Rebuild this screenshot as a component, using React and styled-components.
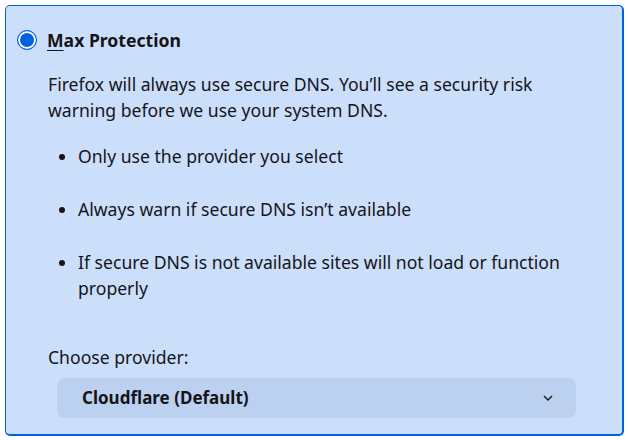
import styled, { createGlobalStyle } from "styled-components";

const GlobalStyle = createGlobalStyle`
  html, body {
    margin: 0;
    padding: 0;
    background: #ffffff;
  }
  body {
    font-family: "Noto Sans", "Open Sans", sans-serif;
    color: #15141a;
  }
`;

const Card = styled.div`
  box-sizing: border-box;
  width: 619px;
  height: 431px;
  margin: 5px 0 0 5px;
  padding: 21px 0 0 11px;
  background: #cbdffb;
  border: 1px solid #0061e0;
  border-bottom-width: 2px;
  border-right-width: 2px;
  border-radius: 5px;
`;

const Header = styled.label`
  display: flex;
  align-items: center;
  gap: 10px;
  height: 26px;
`;

const Radio = styled.span`
  box-sizing: border-box;
  width: 20px;
  height: 20px;
  border-radius: 50%;
  border: 1px solid #0061e0;
  background: #0061e0;
  box-shadow: inset 0 0 0 2px #ffffff;
  flex-shrink: 0;
`;

const Title = styled.span`
  font-size: 17.6px;
  font-weight: 700;
  u {
    text-decoration-thickness: 1px;
    text-underline-offset: 3px;
  }
`;

const Body = styled.div`
  padding-left: 31px;
  width: 540px;
  font-size: 17.6px;
  line-height: 26px;
`;

const Description = styled.p`
  margin: 18px 0 0;
`;

const List = styled.ul`
  margin: 20px 0 0;
  padding-left: 30px;
  display: flex;
  flex-direction: column;
  gap: 27px;
`;

const Item = styled.li``;

const Label = styled.div`
  margin-top: 43px;
`;

const Select = styled.div`
  display: flex;
  align-items: center;
  justify-content: space-between;
  margin: 8px 0 0 9px;
  width: 519px;
  height: 40px;
  box-sizing: border-box;
  padding: 0 23px 0 25px;
  background: #bbd1ef;
  border-radius: 8px;
  font-size: 17px;
  font-weight: 700;
`;

export default function App() {
  return (
    <>
      <GlobalStyle />
      <Card>
        <Header>
          <Radio />
          <Title>
            <u>M</u>ax Protection
          </Title>
        </Header>
        <Body>
          <Description>
            Firefox will always use secure DNS. You’ll see a security risk
            warning before we use your system DNS.
          </Description>
          <List>
            <Item>Only use the provider you select</Item>
            <Item>Always warn if secure DNS isn’t available</Item>
            <Item>
              If secure DNS is not available sites will not load or function
              properly
            </Item>
          </List>
          <Label>Choose provider:</Label>
          <Select>
            <span>Cloudflare (Default)</span>
            <svg width="10" height="6" viewBox="0 0 10 6" fill="none">
              <path d="M1 1l4 4 4-4" stroke="#15141a" strokeWidth="1.4" />
            </svg>
          </Select>
        </Body>
      </Card>
    </>
  );
}
